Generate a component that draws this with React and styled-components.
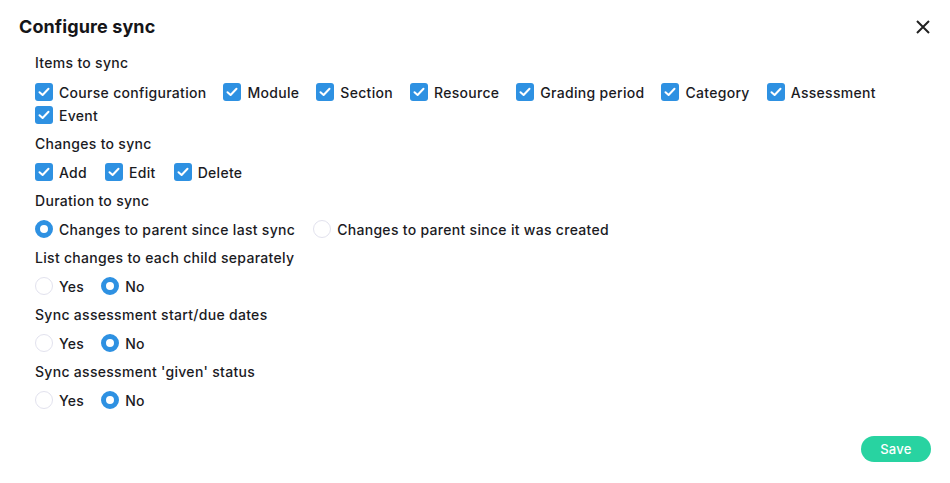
import React, { useState } from "react";
import styled, { createGlobalStyle } from "styled-components";

const Global = createGlobalStyle`
  html, body {
    margin: 0;
    padding: 0;
    background: #fff;
  }
  body {
    font-family: "Inter", "Liberation Sans", sans-serif;
    color: #1b1b1f;
  }
`;

const Modal = styled.div`
  width: 950px;
  height: 483px;
  box-sizing: border-box;
  display: flex;
  flex-direction: column;
  padding: 0 19px 0 19px;
`;

const Header = styled.div`
  display: flex;
  justify-content: space-between;
  align-items: center;
  height: 53px;
`;

const Title = styled.h2`
  margin: 0;
  font-size: 18px;
  font-weight: 700;
  letter-spacing: 0.1px;
  color: #151518;
`;

const CloseButton = styled.button`
  border: none;
  background: none;
  padding: 0;
  width: 16px;
  height: 16px;
  display: flex;
  cursor: pointer;
`;

const Body = styled.div`
  padding-left: 16px;
  display: flex;
  flex-direction: column;
`;

const Section = styled.div`
  display: flex;
  flex-direction: column;
`;

const Label = styled.div`
  font-size: 14px;
  font-weight: 500;
  letter-spacing: 0.3px;
  height: 20px;
  line-height: 20px;
  margin-bottom: ${(p) => (p.first ? 10 : 9)}px;
  color: #1b1b1f;
`;

const Options = styled.div`
  display: flex;
  flex-wrap: wrap;
  column-gap: ${(p) => p.gap || 17}px;
  row-gap: 5px;
  width: 850px;
  margin-bottom: 10px;
`;

const Option = styled.label`
  display: flex;
  align-items: center;
  gap: 6px;
  font-size: 14px;
  font-weight: 500;
  letter-spacing: 0.3px;
  height: 18px;
  cursor: pointer;
  color: #1b1b1f;
`;

const Box = styled.span`
  width: 18px;
  height: 18px;
  border-radius: 3px;
  background: ${(p) => (p.on ? "#2e91e2" : "#fff")};
  border: ${(p) => (p.on ? "none" : "1px solid #e2e2ec")};
  box-sizing: border-box;
  display: flex;
  align-items: center;
  justify-content: center;
`;

const Radio = styled.span`
  width: 18px;
  height: 18px;
  border-radius: 50%;
  box-sizing: border-box;
  border: ${(p) => (p.on ? "5px solid #2e91e2" : "1px solid #e2e2ee")};
  background: #fff;
`;

const Footer = styled.div`
  margin-top: auto;
  display: flex;
  justify-content: flex-end;
  padding-bottom: 21px;
`;

const SaveButton = styled.button`
  width: 70px;
  height: 26px;
  border: none;
  border-radius: 13px;
  background: #28d3a1;
  color: #fff;
  font-family: inherit;
  font-size: 13px;
  font-weight: 500;
  letter-spacing: 0.3px;
  cursor: pointer;
`;

const Check = () => (
  <svg width="12" height="10" viewBox="0 0 12 10">
    <path d="M1.5 5.2 L4.6 8 L10.5 1.8" fill="none" stroke="#fff" strokeWidth="2" strokeLinecap="round" strokeLinejoin="round" />
  </svg>
);

const items = ["Course configuration", "Module", "Section", "Resource", "Grading period", "Category", "Assessment", "Event"];
const changes = ["Add", "Edit", "Delete"];

const radioGroups = [
  { key: "duration", label: "Duration to sync", options: ["Changes to parent since last sync", "Changes to parent since it was created"], gap: 18 },
  { key: "list", label: "List changes to each child separately", options: ["Yes", "No"], gap: 17 },
  { key: "dates", label: "Sync assessment start/due dates", options: ["Yes", "No"], gap: 17 },
  { key: "given", label: "Sync assessment 'given' status", options: ["Yes", "No"], gap: 17 }
];

export default function App() {
  const [checked, setChecked] = useState(() => Object.fromEntries([...items, ...changes].map((i) => [i, true])));
  const [radios, setRadios] = useState({
    duration: "Changes to parent since last sync",
    list: "No",
    dates: "No",
    given: "No"
  });

  const toggle = (k) => setChecked({ ...checked, [k]: !checked[k] });

  return (
    <Modal>
      <Global />
      <Header>
        <Title>Configure sync</Title>
        <CloseButton>
          <svg width="16" height="16" viewBox="0 0 16 16">
            <path d="M2 2 L14 14 M14 2 L2 14" stroke="#222" strokeWidth="2" strokeLinecap="butt" />
          </svg>
        </CloseButton>
      </Header>
      <Body>
        <Section>
          <Label first>Items to sync</Label>
          <Options>
            {items.map((i) => (
              <Option key={i} onClick={() => toggle(i)}>
                <Box on={checked[i]}>{checked[i] && <Check />}</Box>
                {i}
              </Option>
            ))}
          </Options>
        </Section>
        <Section>
          <Label>Changes to sync</Label>
          <Options gap={18}>
            {changes.map((i) => (
              <Option key={i} onClick={() => toggle(i)}>
                <Box on={checked[i]}>{checked[i] && <Check />}</Box>
                {i}
              </Option>
            ))}
          </Options>
        </Section>
        {radioGroups.map((g) => (
          <Section key={g.key}>
            <Label>{g.label}</Label>
            <Options gap={g.gap}>
              {g.options.map((o) => (
                <Option key={o} onClick={() => setRadios({ ...radios, [g.key]: o })}>
                  <Radio on={radios[g.key] === o} />
                  {o}
                </Option>
              ))}
            </Options>
          </Section>
        ))}
      </Body>
      <Footer>
        <SaveButton>Save</SaveButton>
      </Footer>
    </Modal>
  );
}
